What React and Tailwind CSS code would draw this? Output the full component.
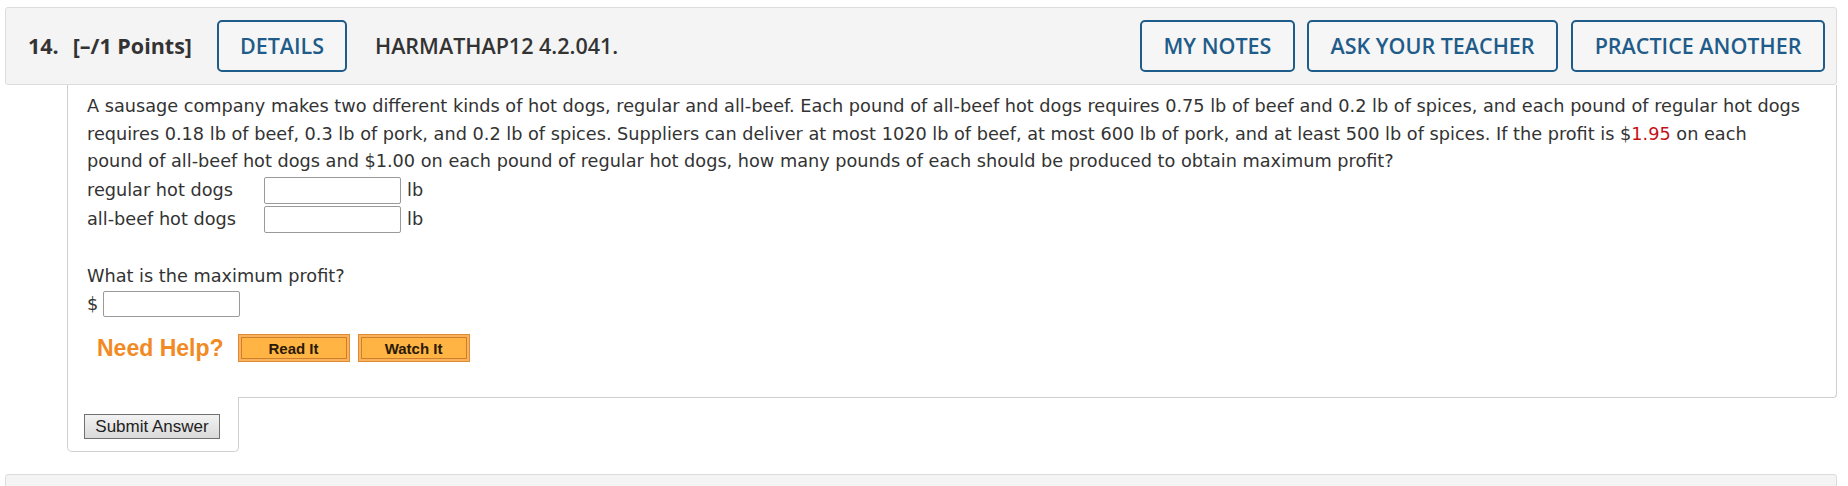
import React from "react";

const Blue = ({ w, children }) => (
  <button
    className={`${w} h-[52px] shrink-0 rounded-[5px] border-2 border-[#1f5c8a] bg-[#f6f6f6] text-[#1f5c8a] flex items-center justify-center`}
  >
    {children}
  </button>
);

const Orange = ({ w, children }) => (
  <button
    className={`${w} h-[28px] p-[2px] border border-[#df8a33] bg-[#f9b35c] font-['Liberation_Sans',Arial,sans-serif]`}
  >
    <span className="flex h-full items-center justify-center border border-[#d27d27] bg-[#ffb444] text-[15px] font-bold leading-none text-[#2a1a05]">
      {children}
    </span>
  </button>
);

const Answer = ({ w = "w-[137px]", h = "h-[27px]" }) => (
  <input
    type="text"
    className={`${w} ${h} rounded-[2px] border border-[#9a9a9a] bg-white outline-none`}
  />
);

export default function App() {
  return (
    <div className="min-h-screen w-[1848px] bg-white pt-[7px]">
      {/* question header */}
      <div className="ml-[5px] mr-[11px] h-[78px] flex items-center rounded-[3px] border border-[#dcdcdc] bg-[#f4f4f4] pl-[22px] pr-[11px] font-['Open_Sans',sans-serif] text-[21.5px] font-semibold text-[#333]">
        <span className="font-bold">14.</span>
        <span className="ml-[14px] font-bold">[–/1 Points]</span>
        <div className="ml-[25px]">
          <Blue w="w-[130px]">DETAILS</Blue>
        </div>
        <span className="ml-[28px]">HARMATHAP12 4.2.041.</span>
        <div className="flex-1" />
        <Blue w="w-[155px]">MY NOTES</Blue>
        <div className="ml-[12px]">
          <Blue w="w-[251px]">ASK YOUR TEACHER</Blue>
        </div>
        <div className="ml-[13px]">
          <Blue w="w-[254px]">PRACTICE ANOTHER</Blue>
        </div>
      </div>

      {/* question body */}
      <div className="ml-[67px] mr-[11px]">
        <div className="h-[313px] rounded-br-[4px] border-x border-b border-[#cfcfcf] pl-[19px] pt-[8px] font-['DejaVu_Sans',sans-serif] text-[17.7px] text-[#333]">
          <p className="leading-[27.5px] whitespace-nowrap">
            A sausage company makes two different kinds of hot dogs, regular and all-beef. Each pound of all-beef hot dogs requires 0.75 lb of beef and 0.2 lb of spices, and each pound of regular hot dogs
            <br />
            requires 0.18 lb of beef, 0.3 lb of pork, and 0.2 lb of spices. Suppliers can deliver at most 1020 lb of beef, at most 600 lb of pork, and at least 500 lb of spices. If the profit is $<span className="text-[#c4121a]">1.95</span> on each
            <br />
            pound of all-beef hot dogs and $1.00 on each pound of regular hot dogs, how many pounds of each should be produced to obtain maximum profit?
          </p>
          <div className="flex h-[29px] items-center">
            <span className="w-[177px]">regular hot dogs</span>
            <Answer />
            <span className="ml-[6px]">lb</span>
          </div>
          <div className="flex h-[29px] items-center">
            <span className="w-[177px]">all-beef hot dogs</span>
            <Answer />
            <span className="ml-[6px]">lb</span>
          </div>
          <p className="mt-[29px] leading-[27.5px]">What is the maximum profit?</p>
          <div className="flex h-[29px] items-center">
            <span>$</span>
            <div className="ml-[5px]">
              <Answer h="h-[26px]" />
            </div>
          </div>
          <div className="mt-[15px] flex h-[28px] items-center">
            <span className="ml-[10px] font-['Liberation_Sans',Arial,sans-serif] text-[23px] font-bold text-[#f28a23]">
              Need Help?
            </span>
            <div className="ml-[14px]">
              <Orange w="w-[112px]">Read It</Orange>
            </div>
            <div className="ml-[8px]">
              <Orange w="w-[112px]">Watch It</Orange>
            </div>
          </div>
        </div>
        <div className="-mt-px h-[55px] w-[172px] rounded-b-[5px] border-x border-b border-[#cfcfcf] bg-white pl-[16px] pt-[17px]">
          <button className="h-[25px] w-[136px] border border-[#707070] bg-gradient-to-b from-[#f2f2f2] to-[#dadada] font-['Liberation_Sans',Arial,sans-serif] text-[17px] leading-none text-[#222]">
            Submit Answer
          </button>
        </div>
      </div>

      {/* next question header */}
      <div className="ml-[5px] mr-[11px] mt-[22px] h-[78px] rounded-[3px] border border-[#dcdcdc] bg-[#f4f4f4]" />
    </div>
  );
}
